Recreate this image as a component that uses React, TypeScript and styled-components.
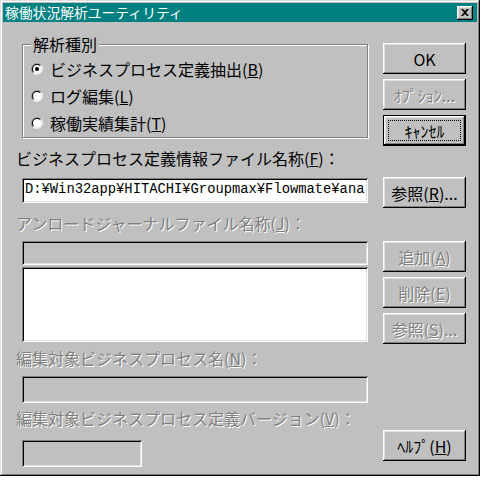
import React from "react";
import styled, { createGlobalStyle, css } from "styled-components";

const FONT = `"Noto Sans CJK JP", "Noto Sans", sans-serif`;

const Global = createGlobalStyle`
  html, body { margin: 0; padding: 0; background: #ffffff; }
  body { font-family: ${FONT}; }
  * { box-sizing: border-box; }
`;

const raised = css`
  box-shadow: inset -1px -1px #000, inset 1px 1px #fff, inset -2px -2px #808080, inset 2px 2px #dfdfdf;
`;

const sunken = css`
  box-shadow: inset 1px 1px #808080, inset -1px -1px #fff, inset 2px 2px #000, inset -2px -2px #dfdfdf;
`;

const disabledText = css`
  color: #808080;
  text-shadow: 1px 1px 0 #fff;
`;

const Window = styled.div`
  width: 480px;
  height: 476px;
  padding: 3px;
  background: #c0c0c0;
  box-shadow: inset -1px -1px #000, inset 1px 1px #dfdfdf, inset -2px -2px #808080, inset 2px 2px #fff;
  display: flex;
  flex-direction: column;
  font-family: ${FONT};
`;

const TitleBar = styled.div`
  height: 19px;
  background: #008080;
  display: flex;
  align-items: center;
  justify-content: space-between;
  padding: 0 4px 0 2px;
`;

const Title = styled.span`
  color: #fff;
  font-size: 13.8px;
  line-height: 19px;
  white-space: nowrap;
`;

const CloseButton = styled.div`
  width: 16px;
  height: 14px;
  background: #c0c0c0;
  ${raised};
  display: flex;
  align-items: center;
  justify-content: center;
`;

const Body = styled.div`
  display: flex;
  gap: 15px;
  padding: 13px 0 0 13px;
`;

const LeftColumn = styled.div`
  width: 352px;
  display: flex;
  flex-direction: column;
`;

const RightColumn = styled.div`
  width: 83px;
  display: flex;
  flex-direction: column;
`;

const GroupBox = styled.fieldset`
  margin: 0 0 0 6px;
  width: 346px;
  min-width: 0;
  padding: 2px 0 1px 8px;
  border: 1px solid #808080;
  box-shadow: inset 1px 1px #fff, 1px 1px 0 #fff;
`;

const Legend = styled.legend`
  padding: 0 2px;
  font-size: 16px;
  line-height: 18px;
  color: #000;
  background: #c0c0c0;
`;

const RadioRow = styled.label`
  height: 27px;
  display: flex;
  align-items: center;
  gap: 7px;
  font-size: 16px;
  line-height: 18px;
  color: #000;
  white-space: nowrap;
`;

const FieldLabel = styled.div<{ $mt: number; $disabled?: boolean }>`
  margin-top: ${(p) => p.$mt}px;
  font-size: 16px;
  line-height: 18px;
  white-space: nowrap;
  color: #000;
  ${(p) => p.$disabled && disabledText};
`;

const Field = styled.div<{ $mt: number; $h: number; $w?: number; $white?: boolean }>`
  margin: ${(p) => p.$mt}px 0 0 6px;
  width: ${(p) => p.$w ?? 346}px;
  height: ${(p) => p.$h}px;
  background: ${(p) => (p.$white ? "#fff" : "#c0c0c0")};
  ${sunken};
  padding: 2px 2px 0 3px;
  overflow: hidden;
  font-family: "Liberation Mono", "DejaVu Sans Mono", monospace;
  font-size: 13.8px;
  line-height: 20px;
  white-space: nowrap;
  color: #000;
`;

const Button = styled.div<{ $mt: number; $disabled?: boolean; $default?: boolean }>`
  position: relative;
  margin-top: ${(p) => p.$mt}px;
  width: 83px;
  height: 31px;
  background: #c0c0c0;
  ${raised};
  display: flex;
  align-items: center;
  justify-content: center;
  font-size: 16px;
  line-height: 18px;
  white-space: nowrap;
  color: #000;
  ${(p) => p.$disabled && disabledText};
  ${(p) =>
    p.$default &&
    css`
      box-shadow: inset 0 0 0 1px #000, inset -2px -2px #000, inset 2px 2px #fff, inset -3px -3px #808080,
        inset 3px 3px #dfdfdf;
      &::after {
        content: "";
        position: absolute;
        inset: 5px;
        border: 1px dotted #000;
      }
    `};
`;

const Radio = ({ checked }: { checked?: boolean }) => (
  <svg width="12" height="12" viewBox="0 0 12 12" style={{ flex: "none" }}>
    <path d="M10.24 1.76 A6 6 0 0 0 1.76 10.24 Z" fill="#808080" />
    <path d="M10.24 1.76 A6 6 0 0 1 1.76 10.24 Z" fill="#fff" />
    <path d="M9.54 2.46 A5 5 0 0 0 2.46 9.54 Z" fill="#000" />
    <path d="M9.54 2.46 A5 5 0 0 1 2.46 9.54 Z" fill="#dfdfdf" />
    <circle cx="6" cy="6" r="4" fill="#fff" />
    {checked && <circle cx="6" cy="6" r="2" fill="#000" />}
  </svg>
);

export default function App() {
  return (
    <>
      <Global />
      <Window>
        <TitleBar>
          <Title>稼働状況解析ユーティリティ</Title>
          <CloseButton>
            <svg width="8" height="7" viewBox="0 0 8 7">
              <path d="M0 0h2l2 2 2-2h2L5 3.5 8 7H6L4 5 2 7H0l3-3.5z" fill="#000" />
            </svg>
          </CloseButton>
        </TitleBar>
        <Body>
          <LeftColumn>
            <GroupBox>
              <Legend>解析種別</Legend>
              <RadioRow>
                <Radio checked />
                <span>
                  ビジネスプロセス定義抽出(<u>B</u>)
                </span>
              </RadioRow>
              <RadioRow>
                <Radio />
                <span>
                  ログ編集(<u>L</u>)
                </span>
              </RadioRow>
              <RadioRow>
                <Radio />
                <span>
                  稼働実績集計(<u>T</u>)
                </span>
              </RadioRow>
            </GroupBox>
            <FieldLabel $mt={11}>
              ビジネスプロセス定義情報ファイル名称(<u>F</u>)：
            </FieldLabel>
            <Field $mt={11} $h={25} $white>
              D:¥Win32app¥HITACHI¥Groupmax¥Flowmate¥ana
            </Field>
            <FieldLabel $mt={11} $disabled>
              アンロードジャーナルファイル名称(<u>J</u>)：
            </FieldLabel>
            <Field $mt={9} $h={24} />
            <Field $mt={2} $h={75} $white />
            <FieldLabel $mt={7} $disabled>
              編集対象ビジネスプロセス名(<u>N</u>)：
            </FieldLabel>
            <Field $mt={9} $h={27} />
            <FieldLabel $mt={6} $disabled>
              編集対象ビジネスプロセス定義バージョン(<u>V</u>)：
            </FieldLabel>
            <Field $mt={13} $h={27} $w={120} />
          </LeftColumn>
          <RightColumn>
            <Button $mt={8}>OK</Button>
            <Button $mt={5} $disabled>
              ｵﾌﾟｼｮﾝ...
            </Button>
            <Button $mt={5} $default>
              ｷｬﾝｾﾙ
            </Button>
            <Button $mt={31}>
              参照(<u>R</u>)...
            </Button>
            <Button $mt={33} $disabled>
              追加(<u>A</u>)
            </Button>
            <Button $mt={5} $disabled>
              削除(<u>E</u>)
            </Button>
            <Button $mt={5} $disabled>
              参照(<u>S</u>)...
            </Button>
            <Button $mt={86}>
              ﾍﾙﾌﾟ(<u>H</u>)
            </Button>
          </RightColumn>
        </Body>
      </Window>
    </>
  );
}
